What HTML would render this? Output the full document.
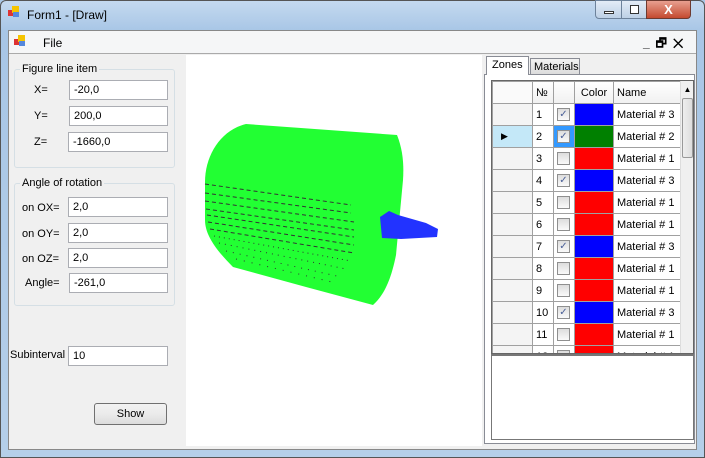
<!DOCTYPE html>
<html><head><style>
*{margin:0;padding:0;box-sizing:border-box}
body{width:705px;height:458px;overflow:hidden;font-family:"Liberation Sans",sans-serif;font-size:11px;background:#a9c7e6;position:relative}
.abs{position:absolute}
.tb{background:#fff;border:1px solid #abadb3;height:20px;padding:3px 4px;font-size:11px}
.lbl{font-size:11px;color:#000}
.grp{border:1px solid #d5dfe5;border-radius:3px}
.gt{background:#f0f0f0;padding:0 2px;font-size:11px}
table{border-collapse:collapse;table-layout:fixed}
td{border:1px solid #a0a0a0;height:22px;font-size:11px;padding:0 3px;white-space:nowrap;overflow:hidden}
.cb{width:13px;height:13px;border:1px solid #8f8f8f;background:linear-gradient(#ddd,#fafafa);display:inline-block;vertical-align:middle;font-size:10px;line-height:11px;text-align:center;color:#4a5f97}
</style></head><body>
<div class="abs" style="left:0;top:0;width:705px;height:458px;background:linear-gradient(#c4d9ef,#a8c6e6 30px,#b5cfe9);border:1px solid #555;border-radius:6px 6px 0 0"></div>
<div class="abs" style="left:8px;top:6px;width:12px;height:12px"><div class="abs" style="left:0;top:4px;width:6px;height:6px;background:#d33"></div><div class="abs" style="left:4px;top:0;width:7px;height:7px;background:#f5c400"></div><div class="abs" style="left:5px;top:6px;width:6px;height:5px;background:#5588dd"></div></div>
<div class="abs" style="left:27px;top:8px;font-size:12px">Form1 - [Draw]</div>
<div class="abs" style="left:595px;top:0;width:27px;height:19px;border:1px solid #6d829b;border-radius:0 0 0 4px;background:linear-gradient(#e3ecf7,#bdd0e6)"><div class="abs" style="left:8px;top:10px;width:10px;height:3px;background:#fff;border:1px solid #333"></div></div>
<div class="abs" style="left:621px;top:0;width:26px;height:19px;border:1px solid #6d829b;background:linear-gradient(#e3ecf7,#bdd0e6)"><div class="abs" style="left:8px;top:4px;width:9px;height:9px;border:1px solid #333;background:#fff"></div></div>
<div class="abs" style="left:646px;top:0;width:45px;height:19px;border:1px solid #6d3a30;border-radius:0 0 4px 0;background:linear-gradient(#e8a090,#c44a30);color:#fff;text-align:center;font-weight:bold;font-size:13px;line-height:17px">X</div>
<div class="abs" style="left:8px;top:30px;width:689px;height:420px;background:#f0f0f0;border:1px solid #888"></div>
<div class="abs" style="left:9px;top:31px;width:687px;height:23px;background:#f5f6f7;border-bottom:1px solid #aaa"></div>
<div class="abs" style="left:14px;top:35px;width:12px;height:12px"><div class="abs" style="left:0;top:4px;width:6px;height:6px;background:#d33"></div><div class="abs" style="left:4px;top:0;width:7px;height:7px;background:#f5c400"></div><div class="abs" style="left:5px;top:6px;width:6px;height:5px;background:#5588dd"></div></div>
<div class="abs" style="left:43px;top:36px;font-size:12px">File</div>
<div class="abs" style="left:643px;top:34px;font-weight:bold;font-size:12px;letter-spacing:6px">_&#x1F5D7;&#x2715;</div>
<div class="abs" style="left:186px;top:55px;width:296px;height:391px;background:#fff"></div>
<div class="abs grp" style="left:14px;top:69px;width:161px;height:99px"></div>
<div class="abs gt" style="left:20px;top:63px">Figure line item</div>
<div class="abs lbl" style="left:34px;top:84px">X=</div><div class="abs tb" style="left:69px;top:80px;width:99px">-20,0</div>
<div class="abs lbl" style="left:34px;top:110px">Y=</div><div class="abs tb" style="left:69px;top:106px;width:99px">200,0</div>
<div class="abs lbl" style="left:34px;top:136px">Z=</div><div class="abs tb" style="left:68px;top:132px;width:100px">-1660,0</div>
<div class="abs grp" style="left:14px;top:183px;width:161px;height:123px"></div>
<div class="abs gt" style="left:20px;top:177px">Angle of rotation</div>
<div class="abs lbl" style="left:22px;top:202px">on OX=</div><div class="abs tb" style="left:68px;top:197px;width:100px">2,0</div>
<div class="abs lbl" style="left:22px;top:228px">on OY=</div><div class="abs tb" style="left:68px;top:223px;width:100px">2,0</div>
<div class="abs lbl" style="left:22px;top:253px">on OZ=</div><div class="abs tb" style="left:68px;top:248px;width:100px">2,0</div>
<div class="abs lbl" style="left:25px;top:277px">Angle=</div><div class="abs tb" style="left:69px;top:273px;width:99px">-261,0</div>
<div class="abs lbl" style="left:10px;top:349px">Subinterval</div><div class="abs tb" style="left:68px;top:346px;width:100px">10</div>
<div class="abs" style="left:94px;top:403px;width:73px;height:22px;border:1px solid #707070;border-radius:3px;background:linear-gradient(#f2f2f2,#ebebeb 50%,#dcdcdc);text-align:center;line-height:20px">Show</div>
<svg class="abs" style="left:186px;top:55px" width="296" height="391">
<path d="M19,127 C19,100 35,75 60,69 L211,80 C217,95 218,110 217,125 L210,200 C205,225 198,240 187,250 L120,232 L47,212 C30,195 19,180 19,165 Z" fill="#22ff33"/>
<g stroke="#333" stroke-width="1" stroke-dasharray="4,3">
<path d="M19,129 L165,150"/><path d="M19,138 L165,158"/><path d="M19,146 L168,167"/><path d="M20,154 L168,175"/><path d="M21,160 L168,182"/><path d="M22,167 L168,190"/><path d="M24,174 L168,198"/>
<path d="M28,181 L165,206" stroke-dasharray="1,4"/><path d="M33,188 L160,214" stroke-dasharray="1,5"/><path d="M40,196 L155,222" stroke-dasharray="1,6"/><path d="M50,204 L150,228" stroke-dasharray="1,7"/>
</g>
<path d="M194,162 L203,156 L212,160 L240,168 L252,174 L251,182 L215,184 L196,183 Z" fill="#2233ff"/>
</svg>
<div class="abs" style="left:484px;top:74px;width:211px;height:370px;background:#fff;border:1px solid #898c95"></div>
<div class="abs" style="left:486px;top:56px;width:43px;height:19px;background:#fff;border:1px solid #898c95;border-bottom:none;padding:2px 5px">Zones</div>
<div class="abs" style="left:530px;top:58px;width:50px;height:17px;background:linear-gradient(#f2f2f2,#dcdcdc);border:1px solid #898c95;padding:2px 3px">Materials</div>
<div class="abs" style="left:491px;top:80px;width:203px;height:274px;overflow:hidden;background:#fff;border:1px solid #666">
<table style="width:189px;position:absolute;left:0;top:0">
<colgroup><col style="width:40px"><col style="width:21px"><col style="width:21px"><col style="width:39px"><col style="width:68px"></colgroup>
<tr style="background:linear-gradient(#fff,#f0f0f0)"><td style="background:#fafafa"></td><td>№</td><td></td><td style="text-align:center">Color</td><td>Name</td></tr>
<tr><td style="background:#f4f4f4"></td><td>1</td><td><span class="cb">✓</span></td><td style="background:#00f"></td><td>Material # 3</td></tr>
<tr><td style="background:#c4e8f8;font-size:9px">&nbsp;&nbsp;▶</td><td>2</td><td style="background:#3399ff"><span class="cb">✓</span></td><td style="background:#008000"></td><td>Material # 2</td></tr>
<tr><td style="background:#f4f4f4"></td><td>3</td><td><span class="cb"></span></td><td style="background:#f00"></td><td>Material # 1</td></tr>
<tr><td style="background:#f4f4f4"></td><td>4</td><td><span class="cb">✓</span></td><td style="background:#00f"></td><td>Material # 3</td></tr>
<tr><td style="background:#f4f4f4"></td><td>5</td><td><span class="cb"></span></td><td style="background:#f00"></td><td>Material # 1</td></tr>
<tr><td style="background:#f4f4f4"></td><td>6</td><td><span class="cb"></span></td><td style="background:#f00"></td><td>Material # 1</td></tr>
<tr><td style="background:#f4f4f4"></td><td>7</td><td><span class="cb">✓</span></td><td style="background:#00f"></td><td>Material # 3</td></tr>
<tr><td style="background:#f4f4f4"></td><td>8</td><td><span class="cb"></span></td><td style="background:#f00"></td><td>Material # 1</td></tr>
<tr><td style="background:#f4f4f4"></td><td>9</td><td><span class="cb"></span></td><td style="background:#f00"></td><td>Material # 1</td></tr>
<tr><td style="background:#f4f4f4"></td><td>10</td><td><span class="cb">✓</span></td><td style="background:#00f"></td><td>Material # 3</td></tr>
<tr><td style="background:#f4f4f4"></td><td>11</td><td><span class="cb"></span></td><td style="background:#f00"></td><td>Material # 1</td></tr>
<tr><td style="background:#f4f4f4"></td><td>12</td><td><span class="cb"></span></td><td style="background:#f00"></td><td>Material # 1</td></tr>
</table>
<div class="abs" style="left:188px;top:0;width:14px;height:274px;background:#f0f0f0;border-left:1px solid #ddd"><div style="text-align:center;font-size:8px;margin-top:4px">▲</div><div class="abs" style="left:1px;top:17px;width:11px;height:60px;border:1px solid #999;border-radius:2px;background:linear-gradient(90deg,#eee,#ddd)"></div></div>
</div>
<div class="abs" style="left:491px;top:354px;width:203px;height:86px;background:#fff;border:1px solid #777;border-top:2px solid #777"></div>
</body></html>
